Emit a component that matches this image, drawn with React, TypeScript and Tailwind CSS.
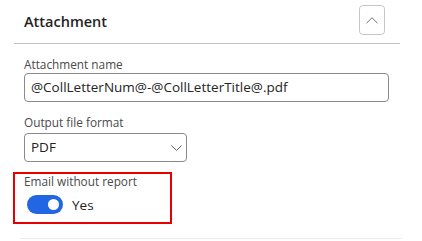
export default function App() {
  return (
    <div className="w-[422px] h-[241px] bg-white overflow-hidden font-['Open_Sans',sans-serif] text-[#242424]">
      {/* header */}
      <div className="mx-[14px] w-[386px] h-[44px] border-b border-[#c4c4c4] flex items-start justify-between pl-[10px] pr-[15px]">
        <h2 className="mt-[11px] text-[14.5px] font-semibold leading-[22px]">Attachment</h2>
        <button className="mt-[5px] w-[26px] h-[30px] rounded-[4px] border border-[#c7c7c7] flex items-center justify-center">
          <svg width="12" height="7" viewBox="0 0 12 7" fill="none">
            <polyline points="0.5,6.2 6,0.8 11.5,6.2" stroke="#707070" strokeWidth="1" />
          </svg>
        </button>
      </div>

      <div className="pl-[24px] pt-[13px] flex flex-col">
        <label className="text-[11.8px] leading-[14px] text-[#4a4a4a]">Attachment name</label>
        <div className="mt-[2px] w-[365px] h-[29px] rounded-[4px] border border-[#8a8a8a] flex items-center px-[6px] text-[13.5px]">
          @CollLetterNum@-@CollLetterTitle@.pdf
        </div>

        <label className="mt-[13px] text-[11.8px] leading-[14px] text-[#4a4a4a]">Output file format</label>
        <div className="mt-[4px] w-[163px] h-[29px] rounded-[4px] border border-[#8a8a8a] flex items-center justify-between pl-[6px] pr-[4px] text-[13.5px]">
          <span>PDF</span>
          <svg width="11" height="6" viewBox="0 0 11 6" fill="none">
            <polyline points="0.4,0.5 5.5,5.4 10.6,0.5" stroke="#616161" strokeWidth="1" />
          </svg>
        </div>

        <div className="-ml-[11px] mt-[10px] w-[159px] h-[52px] border-2 border-[#e60000] pl-[9px]">
          <div className="text-[11.8px] leading-[14px] text-[#4a4a4a]">Email without report</div>
          <div className="mt-[7px] ml-[3px] flex items-center gap-[9px]">
            <div className="w-[36px] h-[19px] rounded-full bg-[#2266e3] flex items-center justify-end pr-[4px]">
              <div className="w-[11px] h-[11px] rounded-full bg-white" />
            </div>
            <span className="text-[13.5px] leading-[18px]">Yes</span>
          </div>
        </div>
      </div>

      <div className="mx-[20px] mt-[14px] h-px bg-[#ececec]" />
    </div>
  );
}
